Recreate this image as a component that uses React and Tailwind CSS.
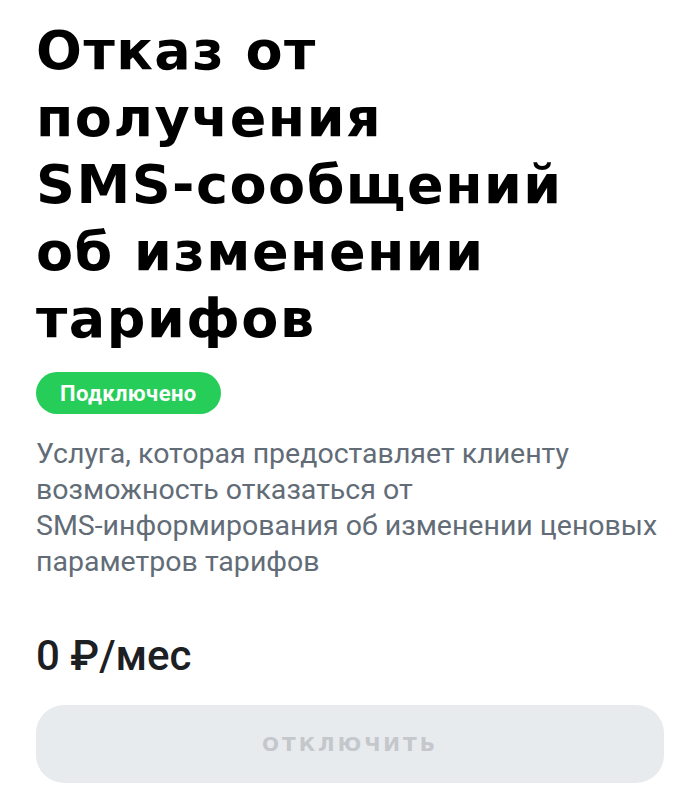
export default function App() {
  return (
    <div className="min-h-screen bg-white px-9 pt-[17px] font-['Roboto',sans-serif]">
      <h1 className="text-[54px] leading-[67px] font-bold text-black font-['DejaVu_Sans',sans-serif] tracking-[1.5px]">
        Отказ от
        <br />
        получения
        <br />
        SMS-сообщений
        <br />
        об изменении
        <br />
        тарифов
      </h1>

      <div className="mt-5 flex">
        <span className="h-[42px] px-6 rounded-full bg-[#26cd58] text-white text-[22px] font-bold tracking-[0.4px] flex items-center">
          Подключено
        </span>
      </div>

      <p className="mt-[22px] text-[28.5px] leading-9 text-[#626c77]">
        Услуга, которая предоставляет клиенту
        <br />
        возможность отказаться от
        <br />
        SMS-информирования об изменении ценовых
        <br />
        параметров тарифов
      </p>

      <div className="mt-[52px] text-[42px] leading-[48px] font-medium text-[#1d2023]">
        0 ₽/мес
      </div>

      <button className="mt-[25px] w-full h-[78px] rounded-[28px] bg-[#e8ebee] flex items-center justify-center">
        <span className="text-[20px] font-bold tracking-[3px] text-[#c4c7cc] font-['DejaVu_Sans',sans-serif]">
          ОТКЛЮЧИТЬ
        </span>
      </button>
    </div>
  );
}
